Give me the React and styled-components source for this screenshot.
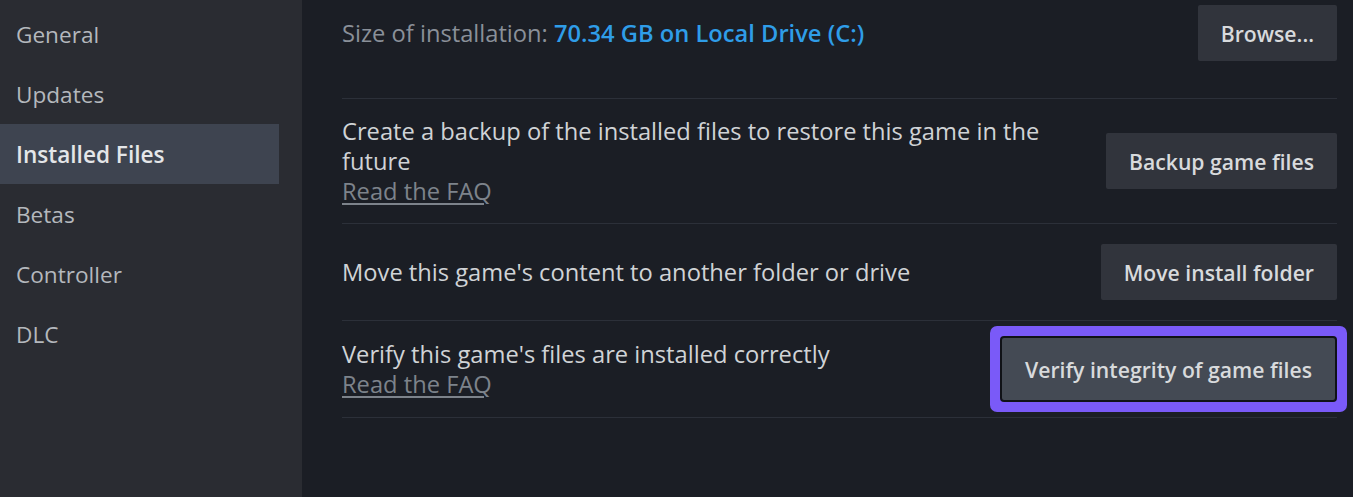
import React from "react";
import styled, { createGlobalStyle } from "styled-components";

const Global = createGlobalStyle`
  html, body {
    margin: 0;
    padding: 0;
    background: #1b1e25;
    font-family: "Open Sans", "Noto Sans", sans-serif;
  }
`;

const navItems = ["General", "Updates", "Installed Files", "Betas", "Controller", "DLC"];

function App() {
  return (
    <>
      <Global />
      <Page>
        <Sidebar>
          {navItems.map((name) => (
            <NavItem key={name} active={name === "Installed Files"}>
              {name}
            </NavItem>
          ))}
        </Sidebar>

        <Content>
          <Row top>
            <Text muted>
              Size of installation: <Blue>70.34 GB on Local Drive (C:)</Blue>
            </Text>
            <Button>Browse...</Button>
          </Row>

          <Row>
            <Text>
              Create a backup of the installed files to restore this game in the
              future
              <br />
              <Faq>Read the FAQ</Faq>
            </Text>
            <Button>Backup game files</Button>
          </Row>

          <Row>
            <Text>Move this game's content to another folder or drive</Text>
            <Button>Move install folder</Button>
          </Row>

          <Row>
            <Text>
              Verify this game's files are installed correctly
              <br />
              <Faq>Read the FAQ</Faq>
            </Text>
            <Button focused>Verify integrity of game files</Button>
          </Row>
        </Content>
      </Page>
    </>
  );
}

const Page = styled.div`
  display: flex;
  width: 1353px;
  height: 497px;
  overflow: hidden;
  background: #1b1e25;
`;

const Sidebar = styled.nav`
  width: 302px;
  flex-shrink: 0;
  background: #2a2c32;
  display: flex;
  flex-direction: column;
  padding-top: 4px;
  box-sizing: border-box;
  padding-right: 23px;
`;

const NavItem = styled.div`
  height: 60px;
  display: flex;
  align-items: center;
  padding-left: 16px;
  font-size: 22.6px;
  font-weight: ${(p) => (p.active ? 600 : 500)};
  color: ${(p) => (p.active ? "#e4e6e8" : "#b4b8bd")};
  background: ${(p) => (p.active ? "#3e4450" : "transparent")};
`;

const Content = styled.main`
  flex: 1;
  padding: 0 16px 0 40px;
  display: flex;
  flex-direction: column;
`;

const Row = styled.div`
  display: flex;
  align-items: center;
  justify-content: space-between;
  gap: 40px;
  min-height: ${(p) => (p.top ? "56px" : "62px")};
  padding: ${(p) => (p.top ? "5px 0 37px" : "17px 0")};
  border-bottom: 1px solid #2c3039;
`;

const Text = styled.div`
  flex: 1;
  font-size: 23.7px;
  line-height: 30px;
  font-weight: 500;
  color: ${(p) => (p.muted ? "#8a9099" : "#d0d3d6")};
`;

const Blue = styled.span`
  color: #2f9de8;
  font-weight: 600;
`;

const Faq = styled.a`
  color: #7d838b;
  text-decoration: underline;
  text-underline-offset: 3px;
`;

const Button = styled.button`
  flex-shrink: 0;
  height: ${(p) => (p.focused ? "62px" : "56px")};
  padding: 0 23px;
  border: none;
  border-radius: 2px;
  background: ${(p) => (p.focused ? "#444a54" : "#31343c")};
  color: #d8dadc;
  font-family: "Open Sans", "Noto Sans", sans-serif;
  font-size: 21.2px;
  font-weight: 600;
  box-shadow: ${(p) =>
    p.focused ? "0 0 0 2px #101217, 0 0 0 12px #7a5af8" : "none"};
  margin-right: ${(p) => (p.focused ? "2px" : "0")};
`;

export default App;
